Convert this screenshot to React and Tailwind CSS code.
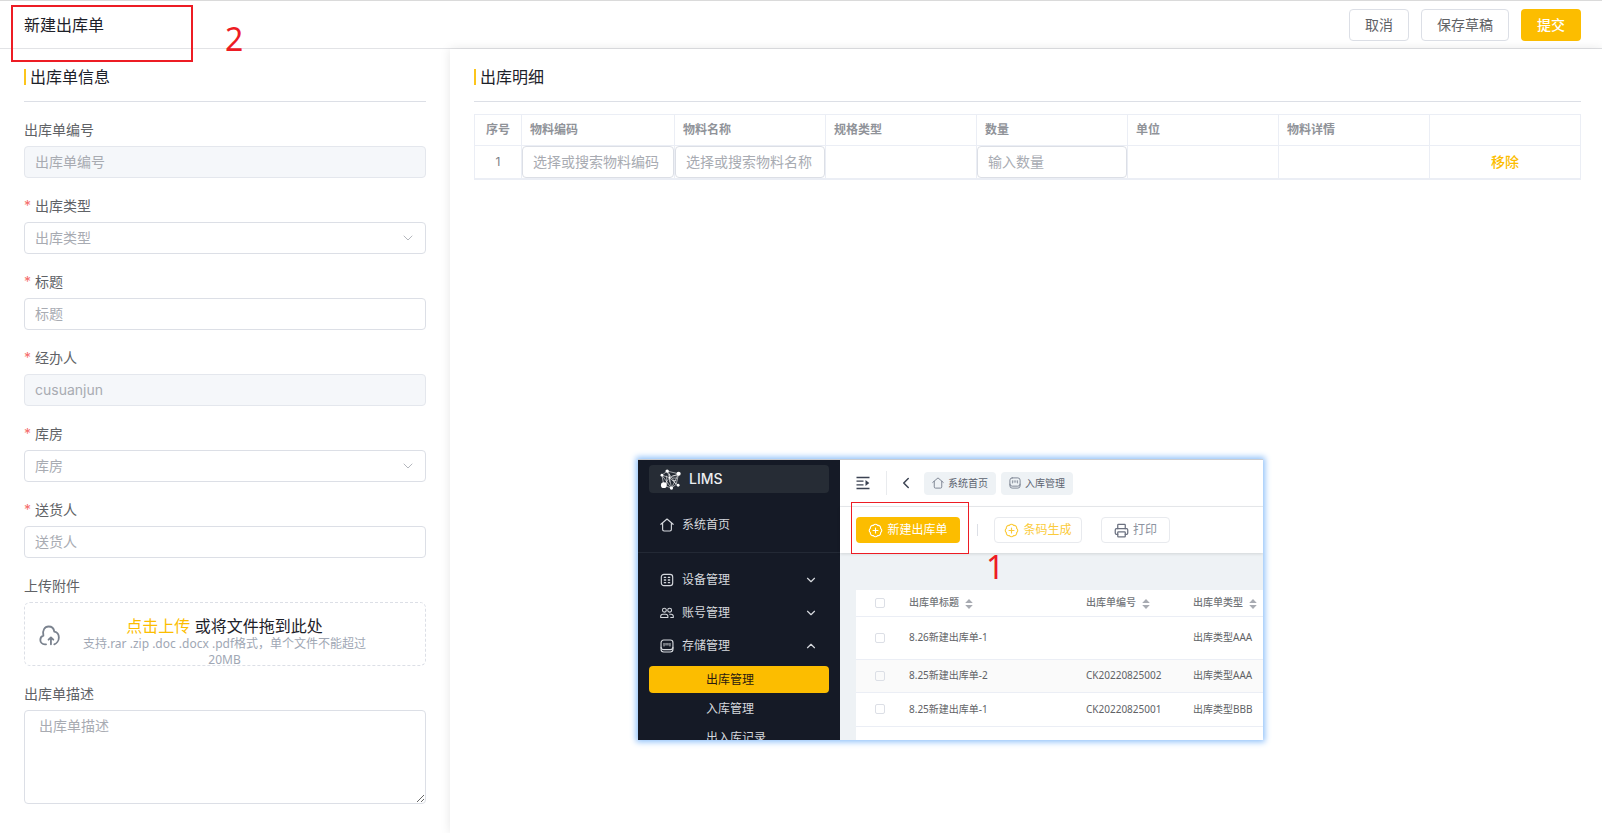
import React from "react";
import { BadgePlus, ChevronDown, ChevronLeft, ChevronUp, Printer } from "lucide-react";
import clsx from "clsx";

const fields = [
    { id: "code", label: "出库单编号", disabled: true },
    { id: "type", label: "出库类型", required: true, select: true },
    { id: "title", label: "标题", required: true },
    { id: "handler", label: "经办人", required: true, disabled: true, value: "cusuanjun" },
    { id: "warehouse", label: "库房", required: true, select: true },
    { id: "sender", label: "送货人", required: true },
];

const columns = ["物料编码", "物料名称", "规格类型", "数量", "单位", "物料详情", ""];

const records = [
    { title: "8.26新建出库单-1", code: "", type: "出库类型AAA", height: "h-[43px]" },
    { title: "8.25新建出库单-2", code: "CK20220825002", type: "出库类型AAA", height: "h-[33px]", active: true },
    { title: "8.25新建出库单-1", code: "CK20220825001", type: "出库类型BBB", height: "h-[34px]" },
];

const HomeIcon = ({ className }) => (
    <svg viewBox="0 0 16 16" className={className} fill="none" stroke="currentColor" strokeWidth="1.3" strokeLinejoin="round" strokeLinecap="round">
        <path d="M1 7.2 8 1.2l7 6M3 5.8v7.4q0 1.600 1.600 1.600h6.800q1.600 0 1.600-1.600V5.8" />
    </svg>
);

const GridIcon = ({ className }) => (
    <svg viewBox="0 0 16 16" className={className} fill="none" stroke="currentColor" strokeWidth="1.3" strokeLinecap="round">
        <rect x="1.5" y="1.5" width="13" height="13" rx="3" />
        <path d="M5 5h1.4M9.6 5H11M5 8h1.4M9.6 8H11M5 11h1.4M9.6 11H11" strokeWidth="1.6" />
    </svg>
);

const UsersIcon = ({ className }) => (
    <svg viewBox="0 0 16 16" className={className} fill="none" stroke="currentColor" strokeWidth="1.2" strokeLinejoin="round">
        <circle cx="5" cy="4.8" r="2.2" />
        <circle cx="11" cy="4.8" r="2.2" />
        <path d="M.8 13.2v-1.4q0-2.4 2.4-2.4h3.4q2.4 0 2.4 2.4v1.4zM10.6 9.4h2.2q2.4 0 2.4 2.4v1.4h-3.4" />
    </svg>
);

const StoreIcon = ({ className }) => (
    <svg viewBox="0 0 16 16" className={className} fill="none" stroke="currentColor" strokeWidth="1.3" strokeLinecap="round" strokeLinejoin="round">
        <rect x="1.2" y="1.2" width="13.6" height="11" rx="3" />
        <path d="M1.2 9.500v2.300q0 3 3 3h7.600q3 0 3-3V9.500" />
        <path d="M4.6 5v3M6.900 5v2M9.100 5v2M11.4 5v3" strokeWidth="1.1" />
    </svg>
);

const CollapseIcon = ({ className }) => (
    <svg viewBox="0 0 14 14" className={className} fill="none" stroke="currentColor" strokeWidth="1.3">
        <path d="M.5 1.5h13M.5 5.2h7M.5 8.8h7M.5 12.5h13" />
        <path d="M9.5 4v6l3.8-3z" fill="currentColor" stroke="none" />
    </svg>
);

const CloudIcon = ({ className }) => (
    <svg viewBox="0 0 22 22" className={className} fill="none" stroke="currentColor" strokeWidth="1.9" strokeLinecap="round" strokeLinejoin="round">
        <path d="M7.4 20.200H6.2C3.2 20.200 1.4 18 1.4 15.600c0-2 1.300-3.800 3.200-4.400C3.200 5.600 6 1.600 10 1.600c3.200 0 5.600 2.200 6 5.400 2.800.6 4.800 3 4.800 6 0 3.400-2.400 6.400-4.800 7.200" />
        <path d="M12.500 20.200v-6.600M10 15.400l2.500-2.400 2.500 2.400" />
    </svg>
);

const LogoIcon = ({ className }) => (
    <svg viewBox="0 0 22 22" className={className} fill="none" stroke="#fff" strokeWidth="0.6">
        <path d="M7.500 2.200 19.500 5M7.500 2.200 2 6.500 4 17M7.500 2.200 10 9l9.500-4-2.500 11-5 4-8-3 6-8M2 6.500 10 9l2 11M7.500 2.200 17 16M19.500 5 12 20M10 9l7 7M2 6.500 12 20M7 7v10M13 7h5M13 9.500h4.500M13 12h4M10 5v9" />
        <g fill="#fff" stroke="none">
            <circle cx="7.500" cy="2.200" r="1.800" />
            <circle cx="19.500" cy="5" r="2.200" />
            <circle cx="2" cy="6.500" r="1.400" />
            <circle cx="4" cy="17" r="3" />
            <circle cx="12" cy="20" r="1.700" />
            <circle cx="19" cy="17" r="1.500" />
            <circle cx="10" cy="9" r="1" />
        </g>
    </svg>
);

const SortIcon = () => (
    <svg viewBox="0 0 8 10" className="ml-1.5 inline-block h-2.5 w-2" fill="#a8abb2">
        <path d="M4 0l3.800 4H.2zM4 10l3.800-4H.2z" />
    </svg>
);

const SectionTitle = ({ children }) => (
    <div className="border-b border-[#dcdfe6] pt-4 pb-3">
        <h2 className="flex items-center gap-1 text-base leading-6 text-[#1d2129]">
            <span className="h-4 w-0.5 bg-[#fcc51c]" />
            {children}
        </h2>
    </div>
);

const Field = ({ field }) => {
    const box = "h-8 w-full rounded border px-2.5 text-sm placeholder:text-[#a8abb2]";
    return (
        <div className="mb-4">
            <label htmlFor={field.id} className="mb-1 block text-sm leading-6 text-[#606266]">
                {field.required && <span className="mr-1 text-[#f56c6c]">*</span>}
                {field.label}
            </label>
            {field.select ? (
                <div className="relative">
                    <select id={field.id} defaultValue="" className={clsx(box, "block appearance-none border-[#dcdfe6] bg-white text-[#a8abb2]")}>
                        <option value="">{field.label}</option>
                    </select>
                    <ChevronDown size={16} strokeWidth={1.3} className="pointer-events-none absolute top-2 right-2.5 text-[#a8abb2]" />
                </div>
            ) : (
                <input
                    id={field.id}
                    type="text"
                    placeholder={field.label}
                    defaultValue={field.value}
                    disabled={field.disabled}
                    className={clsx(box, "block pb-0.5", field.disabled ? "border-[#e4e7ed] bg-[#f5f7fa] text-[#a8abb2]" : "border-[#dcdfe6] bg-white")}
                />
            )}
        </div>
    );
};

const InfoPanel = () => (
    <aside className="w-[450px] shrink-0 pr-6 pl-6">
        <SectionTitle>出库单信息</SectionTitle>
        <form className="pt-4">
            {fields.map((f) => (
                <Field key={f.id} field={f} />
            ))}
            <div className="mb-4">
                <p className="mb-1 text-sm leading-6 text-[#606266]">上传附件</p>
                <div className="flex h-16 rounded-md border border-dashed border-[#dcdfe6] px-3.5">
                    <CloudIcon className="mt-0.5 h-[21px] w-[21px] shrink-0 self-center text-[#7a828e]" />
                    <div className="flex-1 px-4 pt-[13px] pr-[38px] text-center">
                        <p className="text-base leading-5 text-[#1d2129]">
                            <a href="#upload" className="text-[#fcbd00]">点击上传</a> 或将文件拖到此处
                        </p>
                        <p className="font-['Noto_Sans','Noto_Sans_CJK_SC',sans-serif] text-xs leading-4 text-[#a0a7b4]">
                            支持.rar .zip .doc .docx .pdf格式，单个文件不能超过20MB
                        </p>
                    </div>
                </div>
            </div>
            <label htmlFor="desc" className="mb-1 block text-sm leading-6 text-[#606266]">出库单描述</label>
            <textarea
                id="desc"
                placeholder="出库单描述"
                className="block h-[94px] w-full resize-y rounded border border-[#dcdfe6] px-3.5 py-1 text-sm leading-[22px] placeholder:text-[#a8abb2]"
            />
        </form>
    </aside>
);

const DetailTable = () => {
    const cell = "border border-[#ebeef5] p-0";
    const input = "block h-8 w-full rounded border border-[#dcdfe6] px-2.5 pb-0.5 text-sm placeholder:text-[#a8abb2]";
    return (
        <table className="mt-3 w-full table-fixed border-collapse border-b-2 border-[#ebeef5]">
            <colgroup>
                <col className="w-[47px]" />
                <col className="w-[153px]" />
                <col span={6} />
            </colgroup>
            <thead>
                <tr className="h-[31px] text-xs text-[#909399]">
                    <th className={cell}>序号</th>
                    {columns.map((c) => (
                        <th key={c} className="border border-[#ebeef5] px-2 py-0 text-left">{c}</th>
                    ))}
                </tr>
            </thead>
            <tbody>
                <tr className="h-[33px]">
                    <td className={clsx(cell, "text-center text-xs text-[#7b7e85]")}>1</td>
                    <td className={cell}><input aria-label="物料编码" placeholder="选择或搜索物料编码" className={input} /></td>
                    <td className={cell}><input aria-label="物料名称" placeholder="选择或搜索物料名称" className={input} /></td>
                    <td className={cell} />
                    <td className={cell}><input aria-label="数量" placeholder="输入数量" className={input} /></td>
                    <td className={cell} />
                    <td className={cell} />
                    <td className={clsx(cell, "text-center")}>
                        <button type="button" className="block w-full text-sm font-medium text-[#fcbd00]">移除</button>
                    </td>
                </tr>
            </tbody>
        </table>
    );
};

const MenuItem = ({ icon: Icon, label, arrow: Arrow }) => (
    <a href="#menu" className="flex h-[33px] items-center pr-[11px] pl-[11px] text-xs text-[#d5d8dd]">
        <Icon className="mr-2 h-3.5 w-3.5" />
        {label}
        {Arrow && <Arrow size={14} className="ml-auto" />}
    </a>
);

// Overview of the outbound list page
const ListPreview = () => (
    <div className="absolute top-[459px] left-[638px] flex h-[281px] w-[625px] overflow-hidden border-t border-[#c9ccd1] bg-[#eef2f5] font-['Noto_Sans','Noto_Sans_CJK_SC',sans-serif] shadow-[0_0_6px_2px_#8fc1fa]">
        <nav className="w-[202px] shrink-0 bg-[#151a26] px-[11px] pt-[5px]">
            <div className="flex h-7 items-center rounded bg-[#262c35] pl-[11px] font-['Inter',sans-serif] text-sm font-medium text-[#eceef0]">
                <LogoIcon className="mr-2 h-[21px] w-[21px]" />
                LIMS
            </div>
            <div className="mt-[15px]">
                <MenuItem icon={HomeIcon} label="系统首页" />
            </div>
            <div className="-mx-[11px] mt-[11px] border-t border-[#232935] px-[11px] pt-2.5">
                <MenuItem icon={GridIcon} label="设备管理" arrow={ChevronDown} />
                <MenuItem icon={UsersIcon} label="账号管理" arrow={ChevronDown} />
                <MenuItem icon={StoreIcon} label="存储管理" arrow={ChevronUp} />
            </div>
            <div className="mt-1 text-xs text-[#d5d8dd]">
                <a href="#out" className="mb-px flex h-[27px] items-center rounded bg-[#fcbd00] pl-[57px] text-[#2a1a10]">出库管理</a>
                <a href="#in" className="flex h-[29px] items-center pl-[57px]">入库管理</a>
                <a href="#log" className="flex h-[29px] items-center pl-[57px]">出入库记录</a>
            </div>
        </nav>
        <div className="min-w-0 flex-1">
            <div className="flex h-[47px] items-center border-b border-[#e9ebee] bg-white pl-4 text-[10px] text-[#5c6370]">
                <CollapseIcon className="h-3.5 w-3.5 text-[#3b4252]" />
                <span className="ml-4 h-6 w-px bg-[#e9ebee]" />
                <ChevronLeft size={18} strokeWidth={2} className="mr-[9px] ml-2.5 text-[#3b4252]" />
                <a href="#home" className="flex h-[23px] w-[72px] items-center justify-center gap-1 rounded bg-[#eef2f5]">
                    <HomeIcon className="h-3 w-3 text-[#7d8593]" />系统首页
                </a>
                <a href="#inbound" className="ml-[5px] flex h-[23px] w-[72px] items-center justify-center gap-1 rounded bg-[#eef2f5]">
                    <StoreIcon className="h-3 w-3 text-[#7d8593]" />入库管理
                </a>
            </div>
            <div className="flex h-[46px] items-center bg-white pl-4 text-xs shadow-[0_1px_3px_rgba(0,0,0,0.12)]">
                <button type="button" className="flex h-[26px] w-[104px] items-center justify-center gap-1 rounded bg-[#fcbd00] text-white">
                    <BadgePlus size={15} strokeWidth={1.8} />新建出库单
                </button>
                <span className="mr-4 ml-[17px] h-3 w-px bg-[#dcdfe6]" />
                <button type="button" className="flex h-[26px] w-[88px] items-center justify-center gap-1 rounded border border-[#e8eaee] text-[#fbcb3a]">
                    <BadgePlus size={15} strokeWidth={1.8} />条码生成
                </button>
                <button type="button" className="ml-[19px] flex h-[26px] w-[69px] items-center justify-center gap-1 rounded border border-[#e8eaee] text-[#8d93a0]">
                    <Printer size={15} strokeWidth={2} className="text-[#6b7180]" />打印
                </button>
            </div>
            <div className="mt-[37px] ml-4 bg-white pb-4">
                <table className="w-full table-fixed border-collapse text-left text-[10px] text-[#606266]">
                    <colgroup>
                        <col className="w-[53px]" />
                        <col className="w-[177px]" />
                        <col className="w-[107px]" />
                        <col />
                    </colgroup>
                    <thead>
                        <tr className="h-[26px] border-b border-[#ebeef5] text-[#73767a]">
                            <th className="pl-[19px]"><input type="checkbox" aria-label="全选" className="block size-2.5 appearance-none rounded-[2px] border border-[#dcdfe6]" /></th>
                            <th className="font-medium whitespace-nowrap">出库单标题<SortIcon /></th>
                            <th className="font-medium whitespace-nowrap">出库单编号<SortIcon /></th>
                            <th className="font-medium whitespace-nowrap">出库单类型<SortIcon /></th>
                        </tr>
                    </thead>
                    <tbody>
                        {records.map((r) => (
                            <tr key={r.title} className={clsx("border-b border-[#ebeef5]", r.height, r.active && "bg-[#fafafa]")}>
                                <td className="pl-[19px]"><input type="checkbox" aria-label={r.title} className="block size-2.5 appearance-none rounded-[2px] border border-[#dcdfe6]" /></td>
                                <td>{r.title}</td>
                                <td>{r.code}</td>
                                <td className="whitespace-nowrap">{r.type}</td>
                            </tr>
                        ))}
                    </tbody>
                </table>
            </div>
        </div>
    </div>
);

const App = () => (
    <div className="relative flex min-h-screen flex-col bg-white font-['Inter','Noto_Sans_CJK_SC',sans-serif]">
        <header className="flex h-[49px] items-center border-t border-b border-t-[#dadada] border-b-[#e2e3e6] pr-[21px] pl-6">
            <h1 className="text-base text-[#1d2129]">新建出库单</h1>
            <div className="ml-auto flex gap-3 text-sm text-[#606266]">
                <button type="button" className="h-8 rounded border border-[#dcdfe6] px-[15px]">取消</button>
                <button type="button" className="h-8 rounded border border-[#dcdfe6] px-[15px]">保存草稿</button>
                <button type="button" className="h-8 rounded bg-[#fcbd00] px-4 font-medium text-white">提交</button>
            </div>
        </header>
        <div className="flex flex-1">
            <InfoPanel />
            <main className="min-w-0 flex-1 pr-[21px] pl-6 shadow-[0_0_10px_rgba(0,0,0,0.1)]">
                <SectionTitle>出库明细</SectionTitle>
                <DetailTable />
            </main>
        </div>

        <ListPreview />

        {/* step marks */}
        <div className="pointer-events-none absolute top-[5px] left-[11px] h-[57px] w-[182px] border-2 border-[#ed1c24]" />
        <span className="absolute top-[17px] left-[225px] font-['Noto_Sans',sans-serif] text-[32px] leading-[44px] text-[#ed1c24]">2</span>
        <div className="pointer-events-none absolute top-[502px] left-[851px] h-[52px] w-[118px] border border-[#ed1c24]" />
        <span className="absolute top-[545px] left-[986px] font-['Noto_Sans',sans-serif] text-[32px] leading-[44px] text-[#ed1c24]">1</span>
    </div>
);

export default App;
